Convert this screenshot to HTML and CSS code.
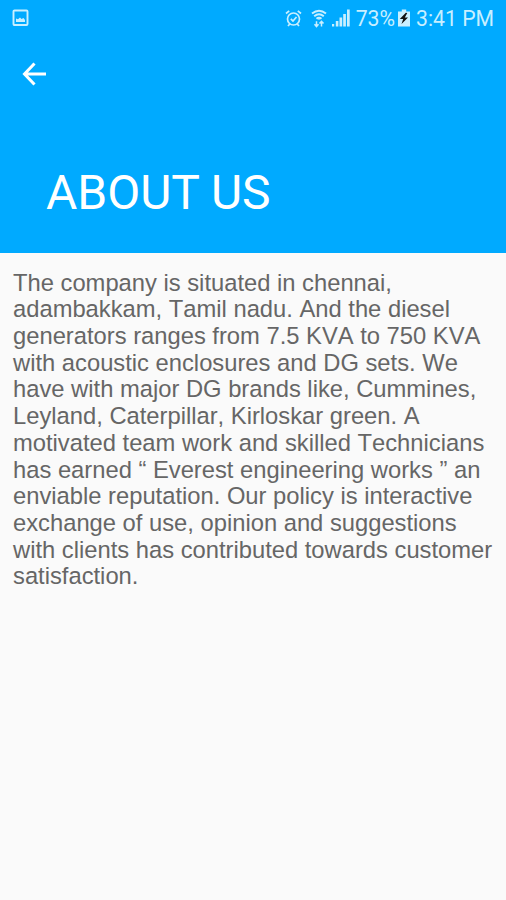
FILE: index.html
```html
<!DOCTYPE html>
<html lang="en">
<head>
  <meta charset="UTF-8">
  <title>About Us</title>
  <link rel="stylesheet" href="styles.css">
</head>
<body>
  <header class="app-header">
    <div class="status-bar">
      <svg class="icon-picture" width="18" height="18" viewBox="0 0 18 18">
        <rect x="1.5" y="1.5" width="14" height="14.5" rx="1" fill="none" stroke="currentColor" stroke-width="1.9"/>
        <path d="M4 13V9.5l2 .8 2-1.8 1.5 1.5L11.500 9l1.500 2v2z" fill="currentColor"/>
      </svg>
      <div class="status-right">
        <svg class="icon-alarm" width="17" height="19" viewBox="0 0 17 19" fill="none" stroke="currentColor" stroke-width="1.7">
          <circle cx="8.500" cy="10" r="6"/>
          <path d="M1 4.500L4.200 1.800M16 4.500L12.800 1.800M3 17l1.800-2M14 17l-1.800-2M5.800 9.800l2.200 2.200 3.500-4"/>
        </svg>
        <svg class="icon-wifi" width="16" height="19" viewBox="0 0 16 19">
          <path d="M1 4.600Q8-1.200 15 4.600M3.200 7.300Q8 3.200 12.800 7.300M5.500 9.700Q8 7.600 10.500 9.700" fill="none" stroke="currentColor" stroke-width="1.900"/>
          <path d="M6.300 9.500L8 11l1.700-1.500z" fill="currentColor"/>
          <path d="M5.500 12.300v5M3.500 15.200l2 2.300 2-2.300M10.500 17.500v-5M8.500 14.600l2-2.300 2 2.300" fill="none" stroke="currentColor" stroke-width="1.500"/>
        </svg>
        <svg class="icon-signal" width="18" height="18" viewBox="0 0 18 18" fill="currentColor">
          <path d="M0 15h2.200v2.500H0zM3.800 12h2.600v5.500H3.800zM7.500 8.500h2.700v9H7.500zM11.200 5h2.700v12.500h-2.700zM15 .5h2.700v17H15z"/>
        </svg>
        <span class="battery-level">73%</span>
        <svg class="icon-battery" width="12" height="18" viewBox="0 0 12 18">
          <path d="M3.800.5h4.400v2H12v15H0v-15h3.800z" fill="currentColor"/>
          <path d="M7.800 3.800L1.800 10h3.400l-1.700 5L10 8.400H6.800L9.300 4z" fill="#111"/>
        </svg>
        <span class="clock">3:41 PM</span>
      </div>
    </div>
    <a class="back" aria-label="Back">
      <svg width="24" height="24" viewBox="0 0 24 24" fill="none" stroke="#fff" stroke-width="3">
        <path d="M24 12H3M12.500 1.500L2.500 12l10 10.500"/>
      </svg>
    </a>
    <h1 class="title">ABOUT US</h1>
  </header>

  <main class="content">
    <p class="about-text">The company is situated in chennai,<br>
      adambakkam, Tamil nadu. And the diesel<br>
      generators ranges from 7.5 KVA to 750 KVA<br>
      with acoustic enclosures and DG sets. We<br>
      have with major DG brands like, Cummines,<br>
      Leyland, Caterpillar, Kirloskar green. A<br>
      motivated team work and skilled Technicians<br>
      has earned “ Everest engineering works ” an<br>
      enviable reputation. Our policy is interactive<br>
      exchange of use, opinion and suggestions<br>
      with clients has contributed towards customer<br>
      satisfaction.</p>
  </main>
</body>
</html>
```
FILE: styles.css
```css
body {
  margin: 0;
  min-height: 100vh;
  background: #fafafa;
  font-family: Roboto, sans-serif;
}

.app-header {
  box-sizing: border-box;
  height: 253px;
  background: #00aaff;
  color: #fff;
}

.status-bar {
  display: flex;
  align-items: center;
  justify-content: space-between;
  height: 36px;
  padding: 0 12px;
  color: #c9efff;
}

.status-right {
  display: flex;
  align-items: center;
  font-size: 21.2px;
  line-height: 37px;
  white-space: nowrap;
}

.icon-wifi {
  margin-left: 9px;
}

.icon-signal {
  margin-left: 5px;
}

.battery-level {
  margin-left: 6px;
}

.icon-battery {
  margin-left: 3px;
}

.clock {
  margin-left: 6px;
}

.back {
  display: block;
  width: 24px;
  height: 24px;
  margin: 26px 0 0 22px;
}

.back svg {
  display: block;
}

.title {
  margin: 79px 0 0 46px;
  font-size: 48px;
  font-weight: 400;
  line-height: 56px;
}

.content {
  padding: 16.6px 13px;
}

.about-text {
  margin: 0;
  font-family: "Liberation Sans", Arial, sans-serif;
  font-size: 23.75px;
  line-height: 26.7px;
  font-kerning: none;
  color: #666;
  white-space: nowrap;
}
```
